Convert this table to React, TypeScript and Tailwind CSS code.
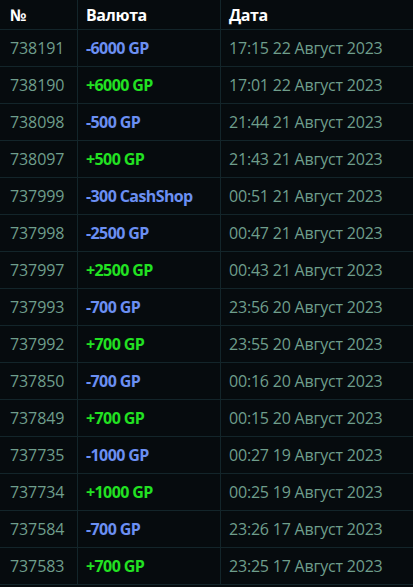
import React from 'react';

type Row = { id: string; amount: string; date: string };

const rows: Row[] = [
  { id: '738191', amount: '-6000 GP', date: '17:15 22 Август 2023' },
  { id: '738190', amount: '+6000 GP', date: '17:01 22 Август 2023' },
  { id: '738098', amount: '-500 GP', date: '21:44 21 Август 2023' },
  { id: '738097', amount: '+500 GP', date: '21:43 21 Август 2023' },
  { id: '737999', amount: '-300 CashShop', date: '00:51 21 Август 2023' },
  { id: '737998', amount: '-2500 GP', date: '00:47 21 Август 2023' },
  { id: '737997', amount: '+2500 GP', date: '00:43 21 Август 2023' },
  { id: '737993', amount: '-700 GP', date: '23:56 20 Август 2023' },
  { id: '737992', amount: '+700 GP', date: '23:55 20 Август 2023' },
  { id: '737850', amount: '-700 GP', date: '00:16 20 Август 2023' },
  { id: '737849', amount: '+700 GP', date: '00:15 20 Август 2023' },
  { id: '737735', amount: '-1000 GP', date: '00:27 19 Август 2023' },
  { id: '737734', amount: '+1000 GP', date: '00:25 19 Август 2023' },
  { id: '737584', amount: '-700 GP', date: '23:26 17 Август 2023' },
  { id: '737583', amount: '+700 GP', date: '23:25 17 Август 2023' },
];

const cell = 'flex items-center border-b border-r border-[#13252a]';

export default function App() {
  return (
    <div className="w-[413px] h-[587px] overflow-hidden bg-[#060b0e] font-['Open_Sans',sans-serif] text-[16px]">
      <div className="grid grid-cols-[78px_143px_1fr]">
        <div className={`${cell} h-[30px] pl-[10px] font-bold text-white`}>№</div>
        <div className={`${cell} h-[30px] pl-2 font-bold text-white tracking-[-0.4px]`}>Валюта</div>
        <div className={`${cell} h-[30px] pl-2 font-bold text-white border-r-0 tracking-[-0.4px]`}>Дата</div>
        {rows.map((r) => {
          const plus = r.amount.startsWith('+');
          return (
            <React.Fragment key={r.id}>
              <div className={`${cell} h-[37px] pl-[10px] text-[#6f9e8c] tracking-[-0.1px]`}>{r.id}</div>
              <div
                className={`${cell} h-[37px] pl-2 font-bold tracking-[-0.6px] ${
                  plus ? 'text-[#22e222]' : 'text-[#6b8ff2]'
                }`}
              >
                {r.amount}
              </div>
              <div className={`${cell} h-[37px] pl-2 text-[#6f9e8c] border-r-0 tracking-[-0.2px]`}>{r.date}</div>
            </React.Fragment>
          );
        })}
      </div>
    </div>
  );
}
